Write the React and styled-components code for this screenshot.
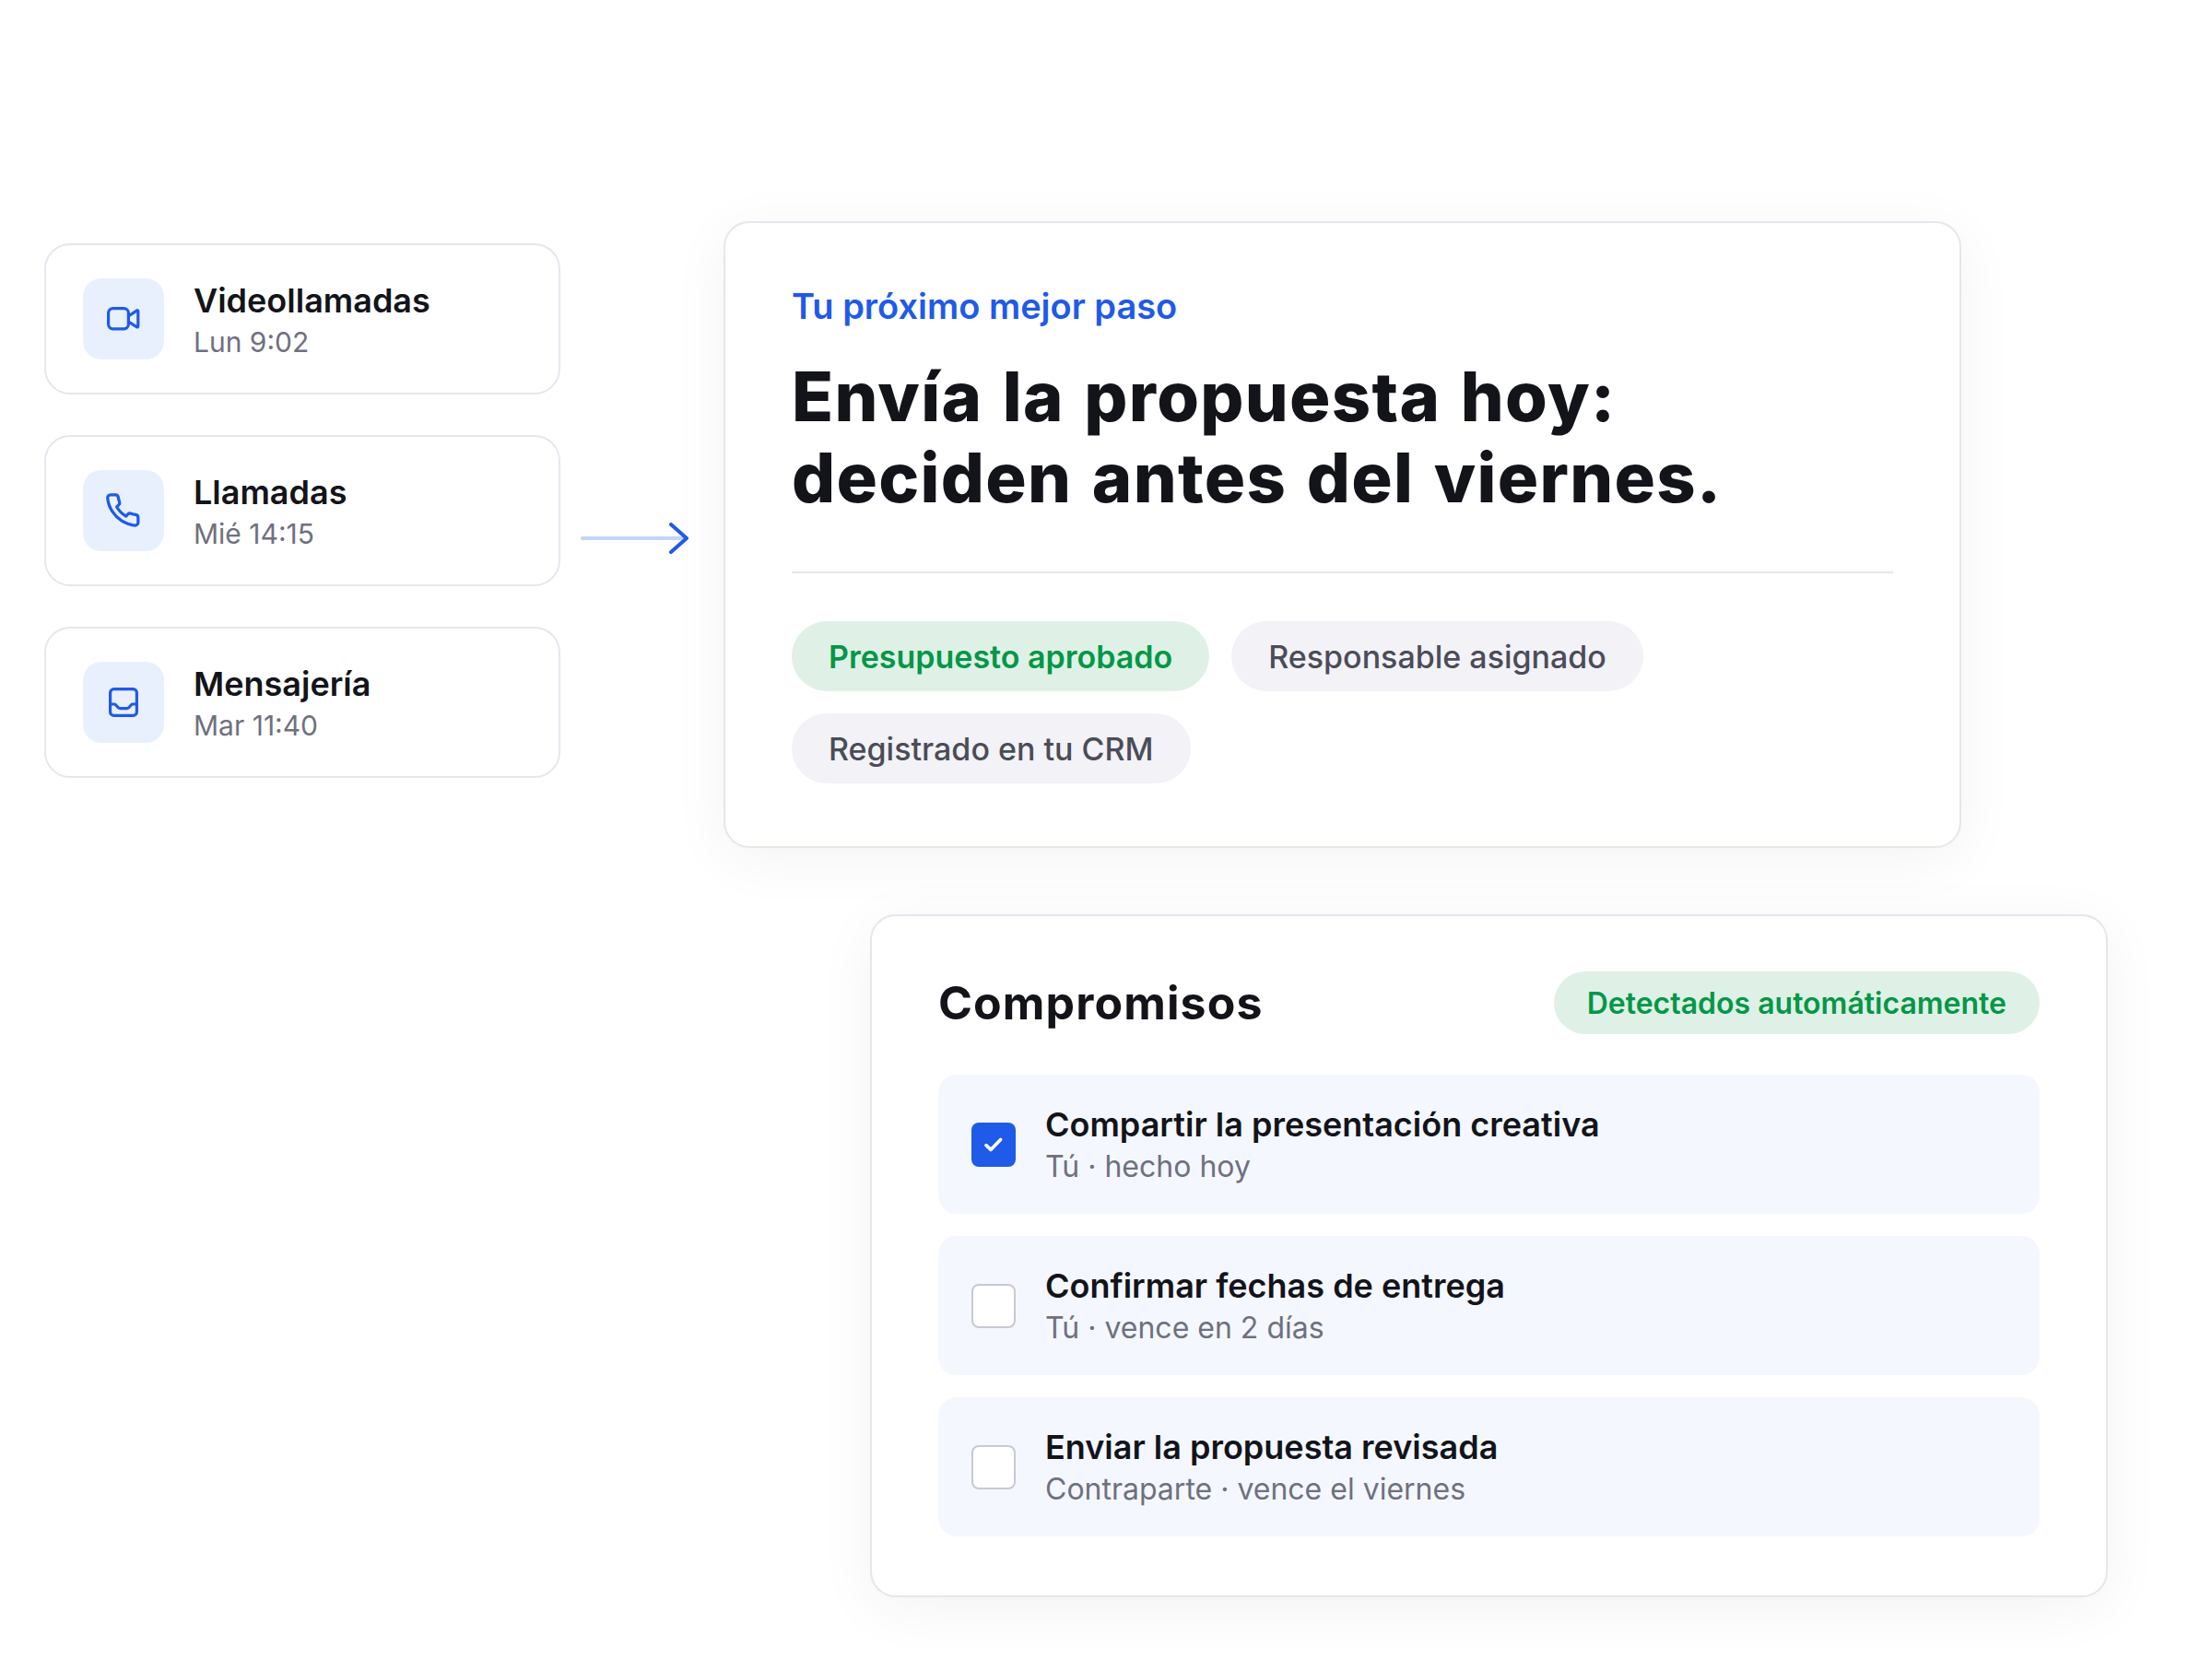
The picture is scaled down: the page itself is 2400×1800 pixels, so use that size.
import styled, { createGlobalStyle } from "styled-components";

const GlobalStyle = createGlobalStyle`
    * {
        box-sizing: border-box;
    }
    body {
        margin: 0;
        background: #fff;
        font-family: Inter, "Liberation Sans", sans-serif;
        color: #13141a;
    }
`;

const sources = [
    { name: "Videollamadas", time: "Lun 9:02", icon: "video" },
    { name: "Llamadas", time: "Mié 14:15", icon: "phone" },
    { name: "Mensajería", time: "Mar 11:40", icon: "inbox" },
];

const chips = [
    { label: "Presupuesto aprobado", green: true },
    { label: "Responsable asignado" },
    { label: "Registrado en tu CRM" },
];

const tasks = [
    { title: "Compartir la presentación creativa", note: "Tú · hecho hoy", done: true },
    { title: "Confirmar fechas de entrega", note: "Tú · vence en 2 días" },
    { title: "Enviar la propuesta revisada", note: "Contraparte · vence el viernes" },
];

function SourceIcon({ type }) {
    return (
        <svg width="40" height="40" viewBox="0 0 40 40" fill="none" stroke="#1f5ae8" strokeWidth="3.2" strokeLinecap="round" strokeLinejoin="round">
            {type === "video" && (
                <>
                    <rect x="3.6" y="8.6" width="21.8" height="22.2" rx="5" />
                    <path d="M25.4 17 34.6 10.8a.8.8 0 0 1 1.2.7v16.6a.8.8 0 0 1-1.2.7L25.4 23" />
                </>
            )}
            {type === "phone" && (
                <g transform="translate(-0.8 -0.5) scale(1.6667)" strokeWidth="1.95">
                    <path d="M22 16.92v3a2 2 0 0 1-2.18 2 19.79 19.79 0 0 1-8.63-3.07 19.5 19.5 0 0 1-6-6 19.79 19.79 0 0 1-3.07-8.67A2 2 0 0 1 4.11 2h3a2 2 0 0 1 2 1.72 12.84 12.84 0 0 0 .7 2.81 2 2 0 0 1-.45 2.11L8.09 9.91a16 16 0 0 0 6 6l1.27-1.27a2 2 0 0 1 2.11-.45 12.84 12.84 0 0 0 2.81.7A2 2 0 0 1 22 16.92z" />
                </g>
            )}
            {type === "inbox" && (
                <>
                    <rect x="5.6" y="5.6" width="28.8" height="28.8" rx="4" />
                    <path d="M5.6 22h5.2l3.4 3.6q1 1 2.4 1h6.8q1.4 0 2.4-1l3.4-3.6h5.2" />
                </>
            )}
        </svg>
    );
}

function App() {
    return (
        <Page>
            <GlobalStyle />
            <TopRow>
                <SourceList>
                    {sources.map((s) => (
                        <SourceCard key={s.name}>
                            <IconTile>
                                <SourceIcon type={s.icon} />
                            </IconTile>
                            <SourceText>
                                <SourceName>{s.name}</SourceName>
                                <SourceTime>{s.time}</SourceTime>
                            </SourceText>
                        </SourceCard>
                    ))}
                </SourceList>
                <Arrow width="117" height="34" viewBox="0 0 117 34" fill="none" strokeWidth="4" strokeLinecap="round" strokeLinejoin="round">
                    <path d="M2 17H112" stroke="#bfd5fb" />
                    <path d="M98 2 115 17 98 32" stroke="#1f5ae8" />
                </Arrow>
                <NextStepCard>
                    <Eyebrow>Tu próximo mejor paso</Eyebrow>
                    <Headline>
                        Envía la propuesta hoy:
                        <br />
                        deciden antes del viernes.
                    </Headline>
                    <Divider />
                    <Chips>
                        {chips.map((c) => (
                            <Chip key={c.label} $green={c.green}>
                                {c.label}
                            </Chip>
                        ))}
                    </Chips>
                </NextStepCard>
            </TopRow>
            <TasksCard>
                <TasksHeader>
                    <TasksTitle>Compromisos</TasksTitle>
                    <AutoPill>Detectados automáticamente</AutoPill>
                </TasksHeader>
                <TaskList>
                    {tasks.map((t) => (
                        <TaskRow key={t.title}>
                            <Checkbox $done={t.done}>
                                {t.done && (
                                    <svg width="48" height="48" viewBox="0 0 48 48" fill="none" stroke="#fff" strokeWidth="3.6" strokeLinecap="round" strokeLinejoin="round">
                                        <path d="M16 24.6 21 29.4 31.6 18.4" />
                                    </svg>
                                )}
                            </Checkbox>
                            <div>
                                <TaskTitle>{t.title}</TaskTitle>
                                <TaskNote>{t.note}</TaskNote>
                            </div>
                        </TaskRow>
                    ))}
                </TaskList>
            </TasksCard>
        </Page>
    );
}

const Page = styled.div`
    width: 2400px;
    height: 1800px;
    padding: 240px 0 0 48px;
    display: flex;
    flex-direction: column;
    gap: 72px;
`;

const TopRow = styled.div`
    display: flex;
`;

const SourceList = styled.div`
    width: 560px;
    margin-top: 24px;
    display: flex;
    flex-direction: column;
    gap: 44px;
`;

const SourceCard = styled.div`
    height: 164px;
    padding: 0 40px;
    display: flex;
    align-items: center;
    gap: 32px;
    background: #fff;
    border: 2px solid #e6e6ee;
    border-radius: 28px;
`;

const IconTile = styled.div`
    width: 88px;
    height: 88px;
    flex: none;
    display: flex;
    align-items: center;
    justify-content: center;
    background: #e9f0fd;
    border-radius: 20px;
`;

const SourceText = styled.div`
    padding-top: 2px;
`;

const SourceName = styled.div`
    font-size: 36px;
    line-height: 46px;
    font-weight: 600;
`;

const SourceTime = styled.div`
    margin-top: 2px;
    font-size: 30px;
    line-height: 40px;
    color: #6f7080;
`;

const Arrow = styled.svg`
    flex: none;
    margin: 0 38px 0 22px;
    align-self: center;
    position: relative;
    top: 4px;
`;

const Card = styled.div`
    width: 1343px;
    background: #fff;
    border: 2px solid #e6e6ee;
    border-radius: 28px;
    box-shadow: 0 12px 64px rgba(19, 20, 26, 0.05);
`;

const NextStepCard = styled(Card)`
    flex: none;
    padding: 68px 72px 68px;
`;

const Eyebrow = styled.div`
    font-size: 38px;
    line-height: 44px;
    font-weight: 600;
    color: #1f5ae8;
`;

const Headline = styled.h1`
    margin: 32px 0 0;
    font-size: 74px;
    line-height: 88px;
    font-weight: 800;
    letter-spacing: 1.3px;
    word-spacing: 4px;
`;

const Divider = styled.div`
    height: 2px;
    margin-top: 58px;
    background: #e6e6ee;
`;

const Chips = styled.div`
    margin-top: 52px;
    display: flex;
    flex-wrap: wrap;
    gap: 24px;
`;

const Chip = styled.div`
    height: 76px;
    padding: 0 40px;
    display: flex;
    align-items: center;
    font-size: 34px;
    font-weight: ${(p) => (p.$green ? 600 : 500)};
    color: ${(p) => (p.$green ? "#049747" : "#4b4c58")};
    background: ${(p) => (p.$green ? "#dff1e6" : "#f2f2f7")};
    border-radius: 38px;
`;

const TasksCard = styled(Card)`
    margin-left: 896px;
    padding: 60px 72px 64px;
`;

const TasksHeader = styled.div`
    display: flex;
    align-items: center;
    justify-content: space-between;
`;

const TasksTitle = styled.h2`
    margin: 0;
    font-size: 50px;
    font-weight: 700;
    letter-spacing: 1.1px;
`;

const AutoPill = styled.div`
    height: 68px;
    padding: 0 36px;
    display: flex;
    align-items: center;
    font-size: 32px;
    font-weight: 600;
    color: #049747;
    background: #dff1e6;
    border-radius: 34px;
`;

const TaskList = styled.div`
    margin-top: 44px;
    display: flex;
    flex-direction: column;
    gap: 24px;
`;

const TaskRow = styled.div`
    height: 151px;
    padding: 0 36px;
    display: flex;
    align-items: center;
    gap: 32px;
    background: #f4f7fe;
    border-radius: 20px;
`;

const Checkbox = styled.div`
    width: 48px;
    height: 48px;
    flex: none;
    background: ${(p) => (p.$done ? "#1f5ae8" : "#fff")};
    border: ${(p) => (p.$done ? "none" : "2px solid #c8c9d2")};
    border-radius: 8px;
`;

const TaskTitle = styled.div`
    font-size: 36px;
    line-height: 46px;
    font-weight: 600;
`;

const TaskNote = styled.div`
    margin-top: 2px;
    font-size: 32px;
    line-height: 42px;
    color: #6f7080;
`;

export default App;
